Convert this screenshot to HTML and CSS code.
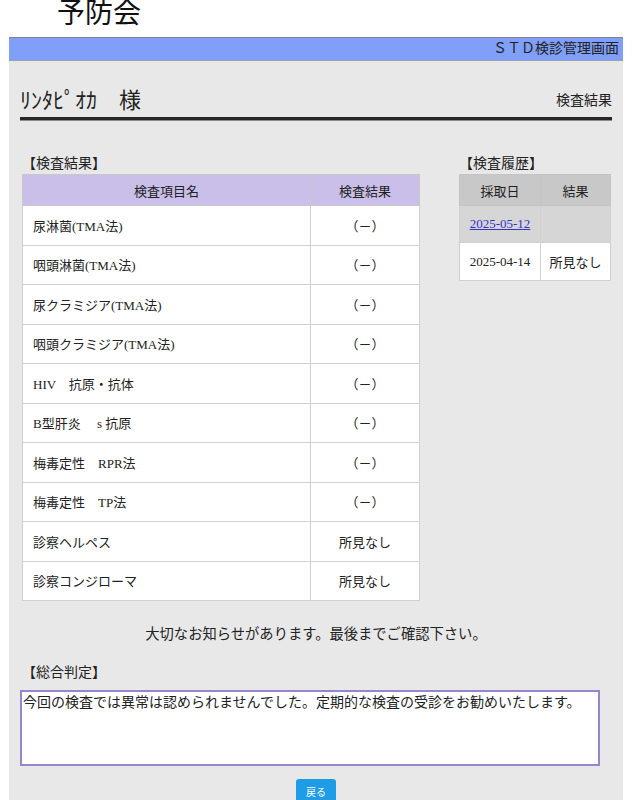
FILE: index.html
```html
<!DOCTYPE html>
<html lang="ja">
<head>
<meta charset="utf-8">
<title>検査結果</title>
<link rel="stylesheet" href="styles.css">
</head>
<body>
<div class="page">
  <div class="logo">予防会</div>
  <div class="bar">ＳＴＤ検診管理画面</div>
  <div class="content">
    <div class="namebar">
      <span class="name">ﾘﾝﾀﾋﾟｵｶ　様</span>
      <span class="pagetitle">検査結果</span>
    </div>
    <div class="columns">
      <section class="results">
        <div class="label">【検査結果】</div>
        <table class="rtable">
          <tr><th>検査項目名</th><th class="res">検査結果</th></tr>
          <tr><td>尿淋菌(TMA法)</td><td class="res">（－）</td></tr>
          <tr><td>咽頭淋菌(TMA法)</td><td class="res">（－）</td></tr>
          <tr><td>尿クラミジア(TMA法)</td><td class="res">（－）</td></tr>
          <tr><td>咽頭クラミジア(TMA法)</td><td class="res">（－）</td></tr>
          <tr><td>HIV　抗原・抗体</td><td class="res">（－）</td></tr>
          <tr><td>B型肝炎　 s 抗原</td><td class="res">（－）</td></tr>
          <tr><td>梅毒定性　RPR法</td><td class="res">（－）</td></tr>
          <tr><td>梅毒定性　TP法</td><td class="res">（－）</td></tr>
          <tr><td>診察ヘルペス</td><td class="res">所見なし</td></tr>
          <tr><td>診察コンジローマ</td><td class="res">所見なし</td></tr>
        </table>
      </section>
      <section class="history">
        <div class="label">【検査履歴】</div>
        <table class="htable">
          <tr><th class="date">採取日</th><th>結果</th></tr>
          <tr class="sel"><td><a href="#">2025-05-12</a></td><td></td></tr>
          <tr><td>2025-04-14</td><td>所見なし</td></tr>
        </table>
      </section>
    </div>
    <p class="notice">大切なお知らせがあります。最後までご確認下さい。</p>
    <div class="label judge-label">【総合判定】</div>
    <textarea class="judge" readonly>今回の検査では異常は認められませんでした。定期的な検査の受診をお勧めいたします。</textarea>
    <div class="actions"><button class="back" type="button">戻る</button></div>
  </div>
</div>
</body>
</html>
```
FILE: styles.css
```css
body {
  margin: 0;
  background: #ffffff;
  font-family: "Liberation Serif", "Noto Sans CJK JP", serif;
  color: #222222;
}

.page {
  margin-left: 9px;
  width: 614px;
}

.logo {
  height: 37px;
  padding-left: 48px;
  font-size: 28px;
  line-height: 28px;
  color: #111111;
}

.bar {
  height: 22px;
  background: #7f9ff8;
  border-top: 1px solid #7c7f96;
  border-bottom: 1px solid #9aa2b8;
  text-align: right;
  padding-right: 4px;
  font-size: 14px;
  line-height: 22px;
  color: #222222;
}

.content {
  background: #e8e8e8;
  padding-bottom: 40px;
}

.namebar {
  margin: 0 11px;
  padding-top: 24px;
  height: 32px;
  display: flex;
  justify-content: space-between;
  align-items: center;
  border-bottom: 3px solid #262626;
  box-shadow: 0 1px 0 #8c8c8c;
}

.name {
  font-size: 22px;
  line-height: 32px;
}

.pagetitle {
  font-size: 14px;
  line-height: 18px;
}

.columns {
  display: flex;
  justify-content: space-between;
  margin: 35px 12px 0 13px;
}

.label {
  font-size: 14px;
  line-height: 18px;
  height: 18px;
  margin-bottom: 1px;
}

.rtable,
.htable {
  border-collapse: collapse;
  background: #ffffff;
  font-size: 13px;
}

.rtable {
  width: 398px;
}

.rtable th {
  height: 30px;
  background: #c9bfe9;
  font-weight: normal;
  border: 1px solid #c8c8c8;
  padding: 0;
}

.rtable td {
  height: 38.5px;
  border: 1px solid #d0d0d0;
  padding: 0 0 0 10px;
}

.rtable .res {
  width: 108px;
  padding: 0;
  text-align: center;
}

.htable {
  width: 152px;
}

.htable th {
  height: 30px;
  background: #c8c8c8;
  font-weight: normal;
  border: 1px solid #c4c4c4;
  padding: 0;
}

.htable th.date {
  width: 80px;
}

.htable td {
  height: 37px;
  border: 1px solid #d0d0d0;
  text-align: center;
  padding: 0;
}

.htable tr.sel td {
  height: 36px;
  background: #d6d6d6;
}

.htable a {
  color: #3434c8;
}

.notice {
  margin: 23px 0 0;
  text-align: center;
  font-size: 14.3px;
  line-height: 20px;
}

.judge-label {
  margin: 20px 0 0 13px;
}

.judge {
  display: block;
  margin: 8px 0 0 11px;
  width: 580px;
  height: 76px;
  box-sizing: border-box;
  border: 2px solid #9686cf;
  background: #ffffff;
  font-family: "Liberation Serif", "Noto Sans CJK JP", serif;
  font-size: 14px;
  line-height: 18px;
  padding: 2px 1px;
  resize: none;
  color: #222222;
  outline: none;
}

.actions {
  margin-top: 13px;
  text-align: center;
}

.back {
  width: 40px;
  height: 24px;
  border: none;
  border-radius: 3px;
  background: #1e9ce6;
  color: #ffffff;
  font-family: "Noto Sans CJK JP", sans-serif;
  font-size: 10px;
  padding: 0;
}
```
